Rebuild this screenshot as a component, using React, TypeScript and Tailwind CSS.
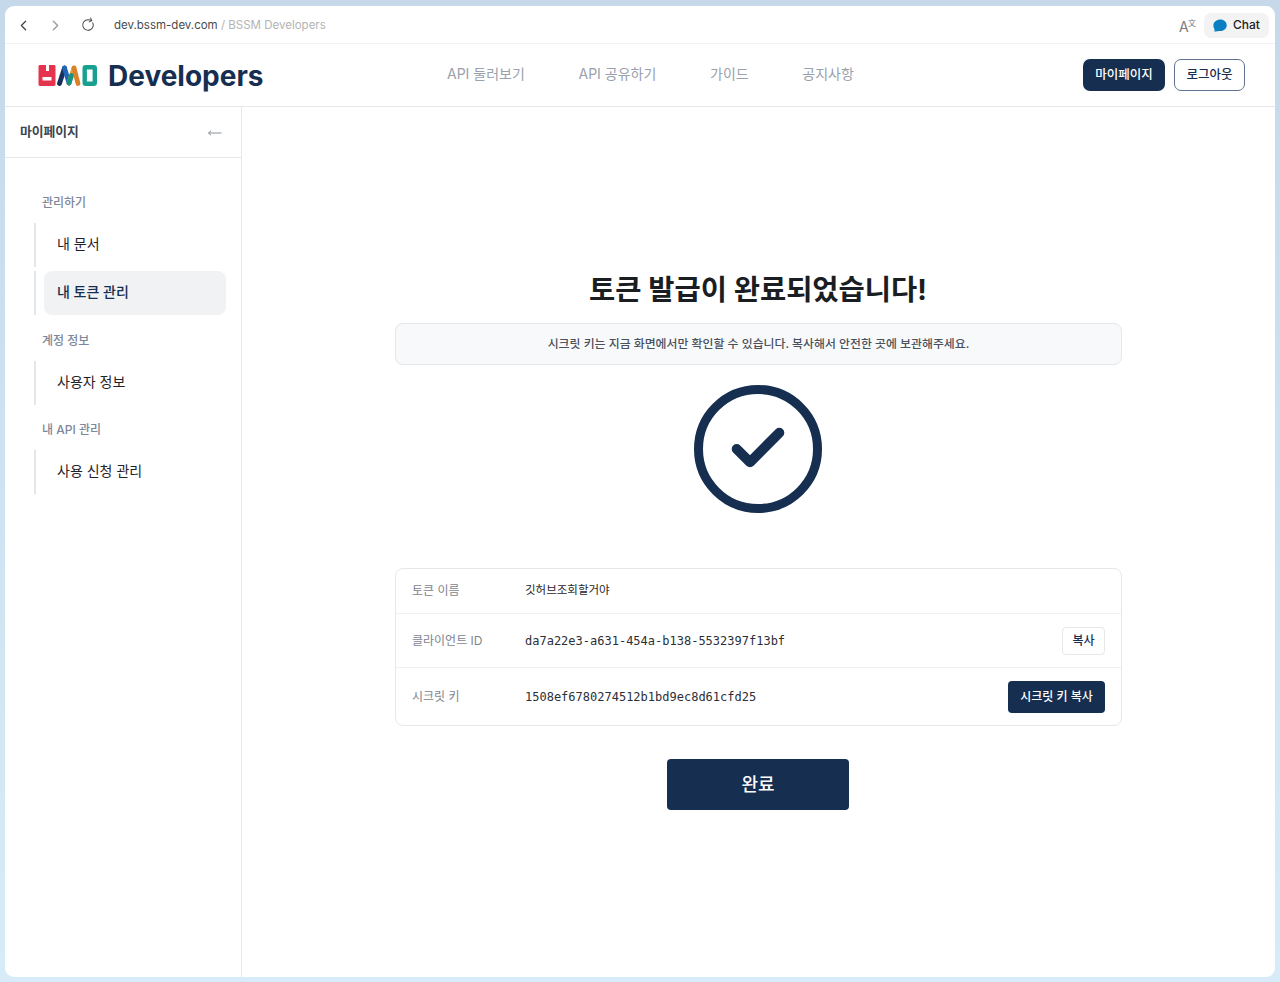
import { ChevronLeft, ChevronRight, RotateCw } from "lucide-react";

const SANS = "font-['Inter','Noto_Sans_CJK_KR',sans-serif]";

const NAV_ITEMS = ["API 둘러보기", "API 공유하기", "가이드", "공지사항"];

const SIDE_GROUPS = [
  { title: "관리하기", items: ["내 문서", "내 토큰 관리"] },
  { title: "계정 정보", items: ["사용자 정보"] },
  { title: "내 API 관리", items: ["사용 신청 관리"] },
];

function Logo() {
  return (
    <svg width="60" height="21" viewBox="0 0 60 21" fill="none">
      <path
        fillRule="evenodd"
        d="M0.5 1.5C0.5 0.6 1.1 0 2 0H8V6H11V0H16C17 0 17.5 0.6 17.5 1.5V19C17.5 20 17 21 16 21H2C1 21 0.5 20 0.5 19V1.5ZM4.5 12V15.5H13.5V12Z"
        fill="#e5344d"
      />
      <path d="M21.5 18.5L26.5 3" stroke="#16305c" strokeWidth="4.8" strokeLinecap="round" />
      <path d="M26.5 3L31 18" stroke="#1f66b8" strokeWidth="4.8" strokeLinecap="round" />
      <path d="M31 18L36 3" stroke="#e8a02c" strokeWidth="4.8" strokeLinecap="round" />
      <path d="M31 18L33.5 10.5" stroke="#16947f" strokeWidth="4.8" strokeLinecap="round" />
      <path d="M36 3L40 18.5" stroke="#d9822b" strokeWidth="4.8" strokeLinecap="round" />
      <rect x="46.7" y="2.2" width="10.1" height="16.6" rx="1" stroke="#15a08f" strokeWidth="4.4" />
    </svg>
  );
}

function TranslateIcon() {
  return (
    <span className="relative h-5 w-5 text-[#7b7b7b]">
      <span className="absolute left-0 top-[5px] text-[14px] leading-none">A</span>
      <span className="absolute left-[9px] top-[4px] text-[8px] leading-none">文</span>
    </span>
  );
}

function SideGroup({ title, items }: { title: string; items: string[] }) {
  return (
    <div>
      <p className="pl-[37px] text-[12px] leading-5 font-medium text-[#7d8799]">{title}</p>
      <ul className="mt-[10px] flex flex-col gap-[4px]">
        {items.map((item) => {
          const active = item === "내 토큰 관리";
          return (
            <li key={item} className="ml-[29px] flex h-[44px] border-l-2 border-[#e3e6ea] pl-[8px] pr-[15px]">
              <span
                className={`flex flex-1 items-center rounded-[8px] pb-[3px] pl-[13px] text-[14px] ${
                  active ? "bg-[#f0f2f4] font-medium text-[#162e50]" : "text-[#1f2329]"
                }`}
              >
                {item}
              </span>
            </li>
          );
        })}
      </ul>
    </div>
  );
}

function TokenRow({
  label,
  value,
  mono,
  className,
  children,
}: {
  label: string;
  value: string;
  mono?: boolean;
  className: string;
  children?: React.ReactNode;
}) {
  return (
    <div className={`flex items-center pl-4 pr-4 ${className}`}>
      <span className="w-[113px] text-[12px] text-[#7d8590]">{label}</span>
      <span
        className={
          mono
            ? "flex-1 font-['DejaVu_Sans_Mono',monospace] text-[12px] text-[#2b3038]"
            : "flex-1 text-[11.5px] text-[#1f2329]"
        }
      >
        {value}
      </span>
      {children}
    </div>
  );
}

export default function App() {
  return (
    <div className={`${SANS} h-[982px] w-[1280px] overflow-hidden bg-gradient-to-b from-[#c6d9ea] to-[#d7ebf8] pb-[5px] pl-[5px] pr-[5px] pt-[6px]`}>
      <div className="flex h-full flex-col overflow-hidden rounded-[9px] bg-white">
        <div className="flex h-[38px] shrink-0 items-center border-b border-[#f1f2f3] pl-[10px] pr-[6px] pt-[1px]">
          <ChevronLeft size={17} strokeWidth={1.8} className="text-[#444]" />
          <ChevronRight size={17} strokeWidth={1.8} className="ml-[15px] text-[#999]" />
          <RotateCw size={14} strokeWidth={1.6} className="ml-[17px] -rotate-[25deg] text-[#444]" />
          <p className="ml-[19px] mt-[1px] text-[11.5px] text-[#4a4a4a]">
            dev.bssm-dev.com <span className="text-[#b4b4b4]">/ BSSM Developers</span>
          </p>
          <div className="ml-auto flex items-center gap-[5px]">
            <TranslateIcon />
            <div className="flex h-[25px] w-[65px] items-center rounded-[7px] bg-[#f3f3f3] pl-[9px] text-[12px] font-medium text-[#222]">
              <svg width="14" height="13" viewBox="0 0 14 13" className="mr-[6px]">
                <path d="M7.5 0.5C11 0.5 13.7 3 13.7 6.2C13.7 9.4 11 12 7.5 12C5.5 12 3.5 12.6 1 12.6C2 11.6 1.6 10.5 1 9.2C0.5 8.2 0.4 7.2 0.4 6.2C0.4 3 3.6 0.5 7.5 0.5Z" fill="#0a7fc4" />
              </svg>
              Chat
            </div>
          </div>
        </div>

        <header className="flex h-[63px] shrink-0 items-center border-b border-[#e5e7eb] pl-[33px] pr-[30px]">
          <div className="flex w-[229px] items-center gap-[10px]">
            <Logo />
            <span className="mt-[1px] text-[28px] leading-none font-bold text-[#162e50]">Developers</span>
          </div>
          <nav className="ml-[180px] flex gap-[53.7px] pb-[3px] text-[14px] text-[#99a1ad]">
            {NAV_ITEMS.map((item) => (
              <span key={item}>{item}</span>
            ))}
          </nav>
          <div className="ml-auto flex items-center gap-[9px] text-[12.5px] font-medium">
            <button className="h-[32px] w-[82px] rounded-[7px] bg-[#162e50] text-white">마이페이지</button>
            <button className="h-[32px] w-[71px] rounded-[7px] border border-[#5f7290] text-[#162e50]">로그아웃</button>
          </div>
        </header>

        <div className="flex min-h-0 flex-1">
          <aside className="w-[237px] shrink-0 border-r border-[#e5e7eb]">
            <div className="flex h-[51px] items-center justify-between border-b border-[#e5e7eb] pl-[15px] pr-[19px]">
              <span className="text-[12.8px] font-semibold text-[#3d4450]">마이페이지</span>
              <svg width="14" height="8" viewBox="0 0 14 8" fill="none" stroke="#8b919a" strokeWidth="1" className="mt-[2px]">
                <path d="M0.5 4H13.5M3 1.8L0.5 4L3 6.2" />
              </svg>
            </div>
            <div className="flex flex-col gap-[15.5px] pt-[35px]">
              {SIDE_GROUPS.map((group) => (
                <SideGroup key={group.title} title={group.title} items={group.items} />
              ))}
            </div>
          </aside>

          <main className="flex flex-1 flex-col items-center pr-[1px] pt-[164px]">
            <h1 className="text-[28.5px] leading-[38px] font-bold text-[#1a1d21]">토큰 발급이 완료되었습니다!</h1>
            <div className="ml-[1px] mt-[14px] flex h-[42px] w-[727px] items-center justify-center rounded-[8px] border border-[#e5e7eb] bg-[#f8f9fa] text-[11.9px] font-medium text-[#4a515c]">
              시크릿 키는 지금 화면에서만 확인할 수 있습니다. 복사해서 안전한 곳에 보관해주세요.
            </div>
            <svg width="128" height="128" viewBox="0 0 128 128" fill="none" className="mt-[20px]">
              <circle cx="64" cy="64" r="59.5" stroke="#162e50" strokeWidth="9" />
              <path d="M42.7 64L56 77.3L85.3 47.7" stroke="#162e50" strokeWidth="10" strokeLinecap="round" strokeLinejoin="round" />
            </svg>

            <div className="ml-[1px] mt-[55px] w-[727px] rounded-[8px] border border-[#e5e7eb] bg-white">
              <TokenRow label="토큰 이름" value="깃허브조회할거야" className="h-[45px] border-b border-[#f0f1f3]" />
              <TokenRow label="클라이언트 ID" value="da7a22e3-a631-454a-b138-5532397f13bf" mono className="h-[54px] border-b border-[#f0f1f3]">
                <button className="h-[28px] w-[43px] rounded-[4px] border border-[#e5e7eb] text-[12px] font-medium text-[#162e50]">복사</button>
              </TokenRow>
              <TokenRow label="시크릿 키" value="1508ef6780274512b1bd9ec8d61cfd25" mono className="h-[57px]">
                <button className="h-[32px] w-[97px] rounded-[4px] bg-[#162e50] text-[12px] font-medium text-white">시크릿 키 복사</button>
              </TokenRow>
            </div>

            <button className="mt-[33px] h-[51px] w-[182px] rounded-[4px] bg-[#162e50] text-[18px] font-medium text-white">완료</button>
          </main>
        </div>
      </div>
    </div>
  );
}
